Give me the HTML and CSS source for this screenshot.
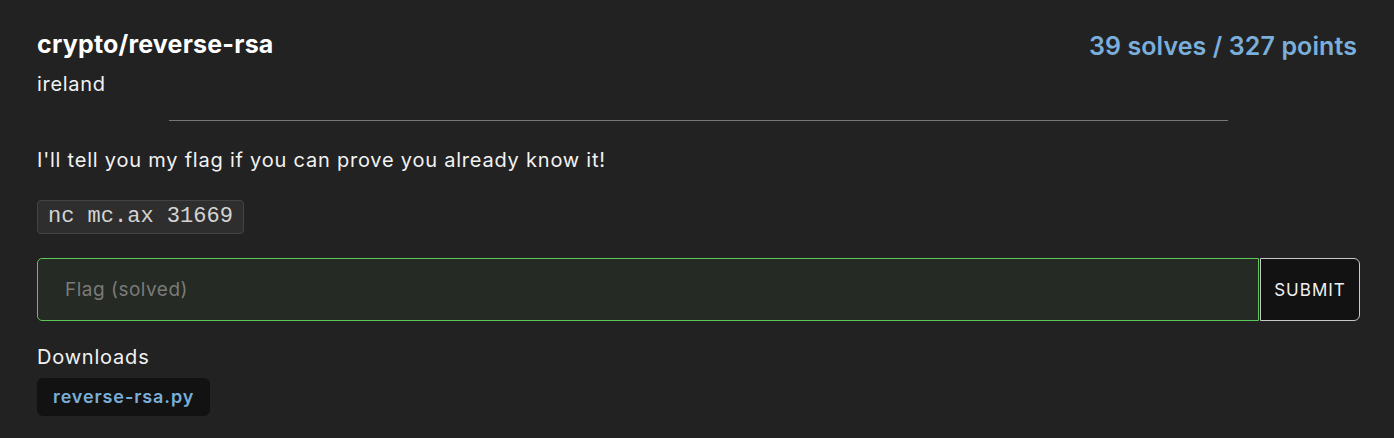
FILE: index.html
```html
<!DOCTYPE html>
<html>
<head>
<meta charset="utf-8">
<link rel="stylesheet" href="styles.css">
</head>
<body>
<div class="card">
  <div class="head">
    <div class="titles">
      <div class="title">crypto/reverse-rsa</div>
      <div class="author">ireland</div>
    </div>
    <div class="score">39 solves / 327 points</div>
  </div>
  <hr class="divider">
  <p class="desc">I'll tell you my flag if you can prove you already know it!</p>
  <code class="cmd">nc mc.ax 31669</code>
  <form class="flag">
    <input class="flag-input" type="text" placeholder="Flag (solved)">
    <button class="submit" type="button">SUBMIT</button>
  </form>
  <div class="dl-title">Downloads</div>
  <a class="dl">reverse-rsa.py</a>
</div>
</body>
</html>
```
FILE: styles.css
```css
html, body {
  margin: 0;
  background: #222222;
}
body {
  font-family: Inter, "Noto Sans", sans-serif;
  color: #f2f2f2;
}
.card {
  padding: 28px 34px 0 37px;
  display: flex;
  flex-direction: column;
  align-items: flex-start;
}
.head {
  display: flex;
  justify-content: space-between;
  align-items: flex-start;
  width: 100%;
}
.title {
  font-size: 25px;
  font-weight: 700;
  line-height: 32px;
  letter-spacing: 0.2px;
  color: #ffffff;
}
.author {
  font-size: 20px;
  line-height: 28px;
  letter-spacing: 0.7px;
  margin-top: 10px;
}
.score {
  font-size: 25px;
  font-weight: 600;
  color: #7aafdb;
  line-height: 32px;
  letter-spacing: 0.1px;
  margin: 2px 3px 0 0;
}
.divider {
  width: 80%;
  border: 0;
  border-top: 1px solid #777;
  margin: 22px auto 25px auto;
}
.desc {
  margin: 0;
  font-size: 20px;
  line-height: 28px;
  letter-spacing: 0.78px;
}
.cmd {
  margin-top: 26px;
  font-family: "Liberation Mono", monospace;
  font-size: 22px;
  line-height: 24px;
  color: #d4d4d4;
  background: #2e2e2e;
  border: 1px solid #444;
  border-radius: 4px;
  padding: 4px 10px;
}
.flag {
  margin: 24px 0 0 0;
  display: flex;
  width: 100%;
  height: 63px;
}
.flag-input {
  flex: 1;
  min-width: 0;
  box-sizing: border-box;
  height: 63px;
  background: #262a24;
  border: 1px solid #5cc858;
  border-radius: 5px 0 0 5px;
  padding: 0 27px;
  font-family: Inter, sans-serif;
  font-size: 19px;
  letter-spacing: 0.5px;
  color: #eee;
  outline: none;
}
.flag-input::placeholder {
  color: #7a7a7a;
}
.submit {
  box-sizing: border-box;
  height: 63px;
  width: 100px;
  margin-left: 1px;
  background: #121212;
  border: 1px solid #c8c8c8;
  border-radius: 0 6px 6px 0;
  color: #f0f0f0;
  font-family: Inter, sans-serif;
  font-size: 17px;
  letter-spacing: 1px;
  padding: 0;
}
.dl-title {
  margin-top: 23px;
  font-size: 20px;
  line-height: 26px;
  letter-spacing: 0.8px;
}
.dl {
  margin-top: 8px;
  background: #121212;
  border-radius: 6px;
  padding: 6px 16px;
  font-size: 18px;
  line-height: 26px;
  font-weight: 600;
  color: #79aed8;
  letter-spacing: 0.9px;
}
```
